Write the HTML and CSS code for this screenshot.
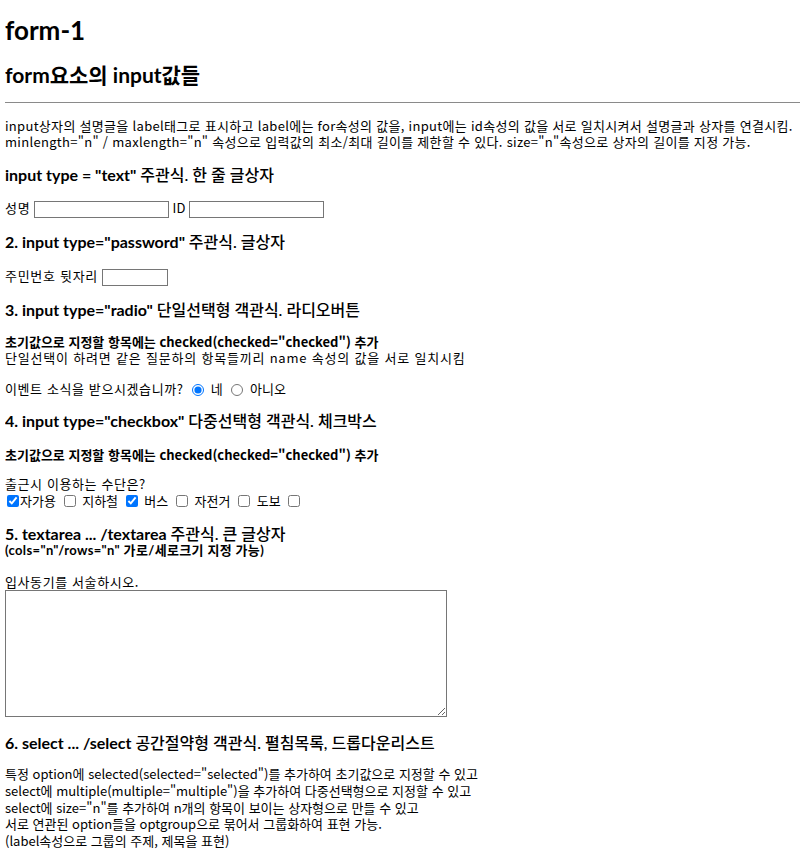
FILE: index.html
```html
<!DOCTYPE html>
<html lang="ko">
<head>
<meta charset="utf-8">
<title>form-1</title>
<link rel="stylesheet" href="styles.css">
</head>
<body>
<h1 class="title">form-1</h1>
<h2 class="subtitle">form요소의 input값들</h2>
<hr class="rule">
<p class="intro">input상자의 설명글을 label태그로 표시하고 label에는 for속성의 값을, input에는 id속성의 값을 서로 일치시켜서 설명글과 상자를 연결시킴.<br>minlength="n" / maxlength="n" 속성으로 입력값의 최소/최대 길이를 제한할 수 있다. size="n"속성으로 상자의 길이를 지정 가능.</p>

<h3 class="sec sec-a">input type = "text" <span class="ko">주관식. 한 줄 글상자</span></h3>
<div class="row row-text"><label for="name" class="lbl">성명</label> <input type="text" id="name" class="field-text"> <label for="uid">ID</label> <input type="text" id="uid" class="field-text"></div>

<h3 class="sec">2. input type="password" <span class="ko">주관식. 글상자</span></h3>
<div class="row"><label for="pw" class="lbl">주민번호 뒷자리</label> <input type="password" id="pw" class="field-pw"></div>

<h3 class="sec">3. input type="radio" <span class="ko">단일선택형 객관식. 라디오버튼</span></h3>
<p class="note"><b>초기값으로 지정할 항목에는 checked(checked="checked") 추가</b><br><span class="wide">단일선택이 하려면 같은 질문하의 항목들끼리 name 속성의 값을 서로 일치시킴</span></p>
<div class="row row-radio"><span class="q">이벤트 소식을 받으시겠습니까?</span> <input type="radio" name="ev" id="yes" checked> <label for="yes">네</label> <input type="radio" name="ev" id="no"> <label for="no">아니오</label></div>

<h3 class="sec sec-d">4. input type="checkbox" <span class="ko">다중선택형 객관식. 체크박스</span></h3>
<p class="note note-d"><b>초기값으로 지정할 항목에는 checked(checked="checked") 추가</b></p>
<p class="checks"><span class="q">출근시 이용하는 수단은?</span><br><input type="checkbox" checked>자가용 <input type="checkbox"> 지하철 <input type="checkbox" checked> 버스 <input type="checkbox"> 자전거 <input type="checkbox"> 도보 <input type="checkbox"></p>

<h3 class="sec sec-e">5. textarea ... /textarea <span class="ko">주관식. 큰 글상자</span></h3>
<p class="sub">(cols="n"/rows="n" 가로/세로크기 지정 가능)</p>
<div class="area-wrap">
  <label for="motive" class="area-label">입사동기를 서술하시오.</label>
  <textarea id="motive" class="area"></textarea>
</div>

<h3 class="sec sec-f">6. select ... /select <span class="ko">공간절약형 객관식. 펼침목록, 드롭다운리스트</span></h3>
<p class="select-note">특정 option에 selected(selected="selected")를 추가하여 초기값으로 지정할 수 있고<br>select에 multiple(multiple="multiple")을 추가하여 다중선택형으로 지정할 수 있고<br>select에 size="n"를 추가하여 n개의 항목이 보이는 상자형으로 만들 수 있고<br>서로 연관된 option들을 optgroup으로 묶어서 그룹화하여 표현 가능.<br>(label속성으로 그룹의 주제, 제목을 표현)</p>
</body>
</html>
```

FILE: styles.css
```css
html, body {
  background: #fff;
  color: #000;
}
body {
  margin: 0 0 0 5px;
  font-family: "Noto Sans CJK KR", "Noto Sans", sans-serif;
  font-size: 13px;
  line-height: 16px;
}
.title {
  font-family: "Lato", "Noto Sans CJK KR", sans-serif;
  font-size: 26px;
  line-height: 30px;
  font-weight: 700;
  margin: 15px 0 0;
}
.subtitle {
  font-family: "Lato", "Noto Sans CJK KR", sans-serif;
  font-size: 21px;
  line-height: 24px;
  font-weight: 700;
  margin: 18px 0 0;
}
.rule {
  border: 0;
  border-top: 1px solid #8a8a8a;
  height: 0;
  margin: 15px 0 0;
}
.intro {
  margin: 15px 0 0;
  white-space: nowrap;
  letter-spacing: 0.3px;
}
.sec {
  font-family: "Lato", "Noto Sans CJK KR", sans-serif;
  font-size: 16px;
  line-height: 20px;
  font-weight: 700;
  margin: 14px 0 0;
}
.sec .ko { font-weight: 500; }
.sec-a { margin-top: 15px; }
.row {
  margin: 14px 0 0;
  line-height: 20px;
  height: 20px;
}
.row-text { margin-top: 13px; }
.lbl { letter-spacing: 0.7px; }
.field-text,
.field-pw {
  box-sizing: border-box;
  height: 17px;
  border: 1px solid #767676;
  border-radius: 0;
  padding: 0 2px;
  margin: 0;
  font: inherit;
  vertical-align: middle;
}
.field-text { width: 135px; }
.field-pw { width: 66px; }
.note {
  margin: 14px 0 0;
}
.note b { font-weight: 700; }
.wide { letter-spacing: 0.8px; }
.row-radio { margin-top: 13px; }
.q { letter-spacing: 0.6px; }
.row input[type="radio"] {
  margin: 0 3px 0 5px;
  width: 12px;
  height: 12px;
  vertical-align: middle;
}
.sec-d { margin-top: 12px; }
.note-d { margin-top: 16px; }
.checks {
  margin: 12px 0 0;
  line-height: 17px;
}
.checks input[type="checkbox"] {
  width: 12px;
  height: 12px;
  margin: 0 3px 0 4px;
  vertical-align: -1px;
}
.checks input[type="checkbox"]:first-of-type {
  margin-left: 2px;
  margin-right: 1px;
}
.sec-e {
  margin-top: 17px;
  line-height: 16px;
}
.sub {
  margin: 0;
  font-family: "Lato", "Noto Sans CJK KR", sans-serif;
  font-size: 13px;
  font-weight: 700;
  line-height: 16px;
  letter-spacing: 0.35px;
}
.area-wrap {
  margin-top: 16px;
}
.area-label {
  display: block;
  line-height: 16px;
  letter-spacing: 0.6px;
}
.area {
  display: block;
  box-sizing: border-box;
  width: 442px;
  height: 127px;
  margin: 0;
  border: 1px solid #767676;
  border-radius: 0;
  font: inherit;
}
.sec-f { margin-top: 16px; }
.select-note {
  margin: 13px 0 0;
  line-height: 16.75px;
}
```
